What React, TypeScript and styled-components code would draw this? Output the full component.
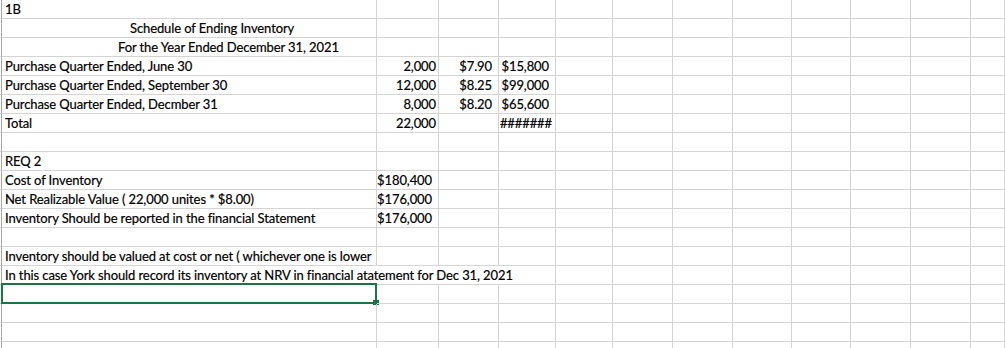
import styled, { createGlobalStyle } from "styled-components";

type Kind = "text" | "num" | "cur" | "hash";

type CellSpec = {
  text?: string;
  kind?: Kind;
  indent?: number;
  open?: boolean;
};

type RowSpec = {
  cells: CellSpec[];
  selected?: boolean;
};

const COLUMNS = [376, 62, 60, 57, 57, 60, 60, 59, 59, 60, 60];

const rows: RowSpec[] = [
  { cells: [{ text: "1B" }] },
  { cells: [{ text: "Schedule of Ending Inventory", indent: 125 }] },
  { cells: [{ text: "For the Year Ended December 31, 2021", indent: 113 }] },
  {
    cells: [
      { text: "Purchase Quarter Ended, June 30" },
      { text: "2,000", kind: "num" },
      { text: "$7.90", kind: "cur" },
      { text: "$15,800", kind: "cur" },
    ],
  },
  {
    cells: [
      { text: "Purchase Quarter Ended, September 30" },
      { text: "12,000", kind: "num" },
      { text: "$8.25", kind: "cur" },
      { text: "$99,000", kind: "cur" },
    ],
  },
  {
    cells: [
      { text: "Purchase Quarter Ended, Decmber 31" },
      { text: "8,000", kind: "num" },
      { text: "$8.20", kind: "cur" },
      { text: "$65,600", kind: "cur" },
    ],
  },
  {
    cells: [{ text: "Total" }, { text: "22,000", kind: "num" }, {}, { text: "#######", kind: "hash" }],
  },
  { cells: [] },
  { cells: [{ text: "REQ 2" }] },
  { cells: [{ text: "Cost of Inventory" }, { text: "$180,400", kind: "cur" }] },
  {
    cells: [{ text: "Net Realizable Value ( 22,000 unites * $8.00)" }, { text: "$176,000", kind: "cur" }],
  },
  {
    cells: [
      { text: "Inventory Should be reported in the financial Statement" },
      { text: "$176,000", kind: "cur" },
    ],
  },
  { cells: [] },
  { cells: [{ text: "Inventory should be valued at cost or net ( whichever one is lower" }] },
  {
    cells: [
      {
        text: "In this case York should record its inventory at NRV in financial atatement for Dec 31, 2021",
        open: true,
      },
      { open: true },
      { open: true },
    ],
  },
  { cells: [], selected: true },
  { cells: [] },
  { cells: [] },
  { cells: [] },
];

export default function App() {
  return (
    <>
      <GlobalStyle />
      <Sheet>
        {rows.map((row, r) => (
          <Row key={r}>
            <Edge />
            {COLUMNS.map((_, c) => {
              const cell = row.cells[c] || {};
              const kind = cell.kind || "text";
              return (
                <Cell
                  key={c}
                  $first={c === 0}
                  $open={!!cell.open}
                  $kind={kind}
                  $indent={cell.indent || 0}
                >
                  {cell.text}
                  {row.selected && c === 0 && (
                    <Selection>
                      <Handle />
                    </Selection>
                  )}
                </Cell>
              );
            })}
            <Cell $first={false} $open={false} $kind="text" $indent={0} />
          </Row>
        ))}
      </Sheet>
    </>
  );
}

const GlobalStyle = createGlobalStyle`
  html, body {
    margin: 0;
    padding: 0;
    background: #ffffff;
    overflow: hidden;
  }
  body {
    font-family: Lato, "Open Sans", sans-serif;
    font-size: 13px;
    color: #000000;
  }
`;

const Sheet = styled.div`
  width: 1005px;
  height: 348px;
  overflow: hidden;
`;

const Row = styled.div`
  display: grid;
  grid-template-columns: 1px ${COLUMNS.map((w) => `${w}px`).join(" ")} 1fr;
  height: 19px;
`;

const Edge = styled.div`
  border-bottom: 1px solid #d4d4d4;
`;

const padRight: Record<Kind, number> = { text: 0, num: 2, cur: 6, hash: 3 };

const Cell = styled.div<{ $first: boolean; $open: boolean; $kind: Kind; $indent: number }>`
  position: relative;
  box-sizing: border-box;
  height: 19px;
  border-bottom: 1px solid #d4d4d4;
  border-right: 1px solid ${({ $open }) => ($open ? "transparent" : "#d4d4d4")};
  border-left: ${({ $first }) => ($first ? "1px solid #a6a6a6" : "none")};
  padding-left: ${({ $kind, $indent }) => ($kind === "text" ? 3 + $indent : 0)}px;
  padding-right: ${({ $kind }) => padRight[$kind]}px;
  display: flex;
  align-items: flex-end;
  justify-content: ${({ $kind }) => ($kind === "text" ? "flex-start" : "flex-end")};
  line-height: 18px;
  white-space: nowrap;
  overflow: visible;
  letter-spacing: -0.1px;
  -webkit-text-stroke: 0.2px #000000;
`;

const Selection = styled.div`
  position: absolute;
  left: -1px;
  top: -2px;
  right: -1px;
  bottom: -1px;
  border: 2px solid #217346;
  pointer-events: none;
`;

const Handle = styled.div`
  position: absolute;
  right: -4px;
  bottom: -3px;
  width: 6px;
  height: 5px;
  background: #217346;
`;
